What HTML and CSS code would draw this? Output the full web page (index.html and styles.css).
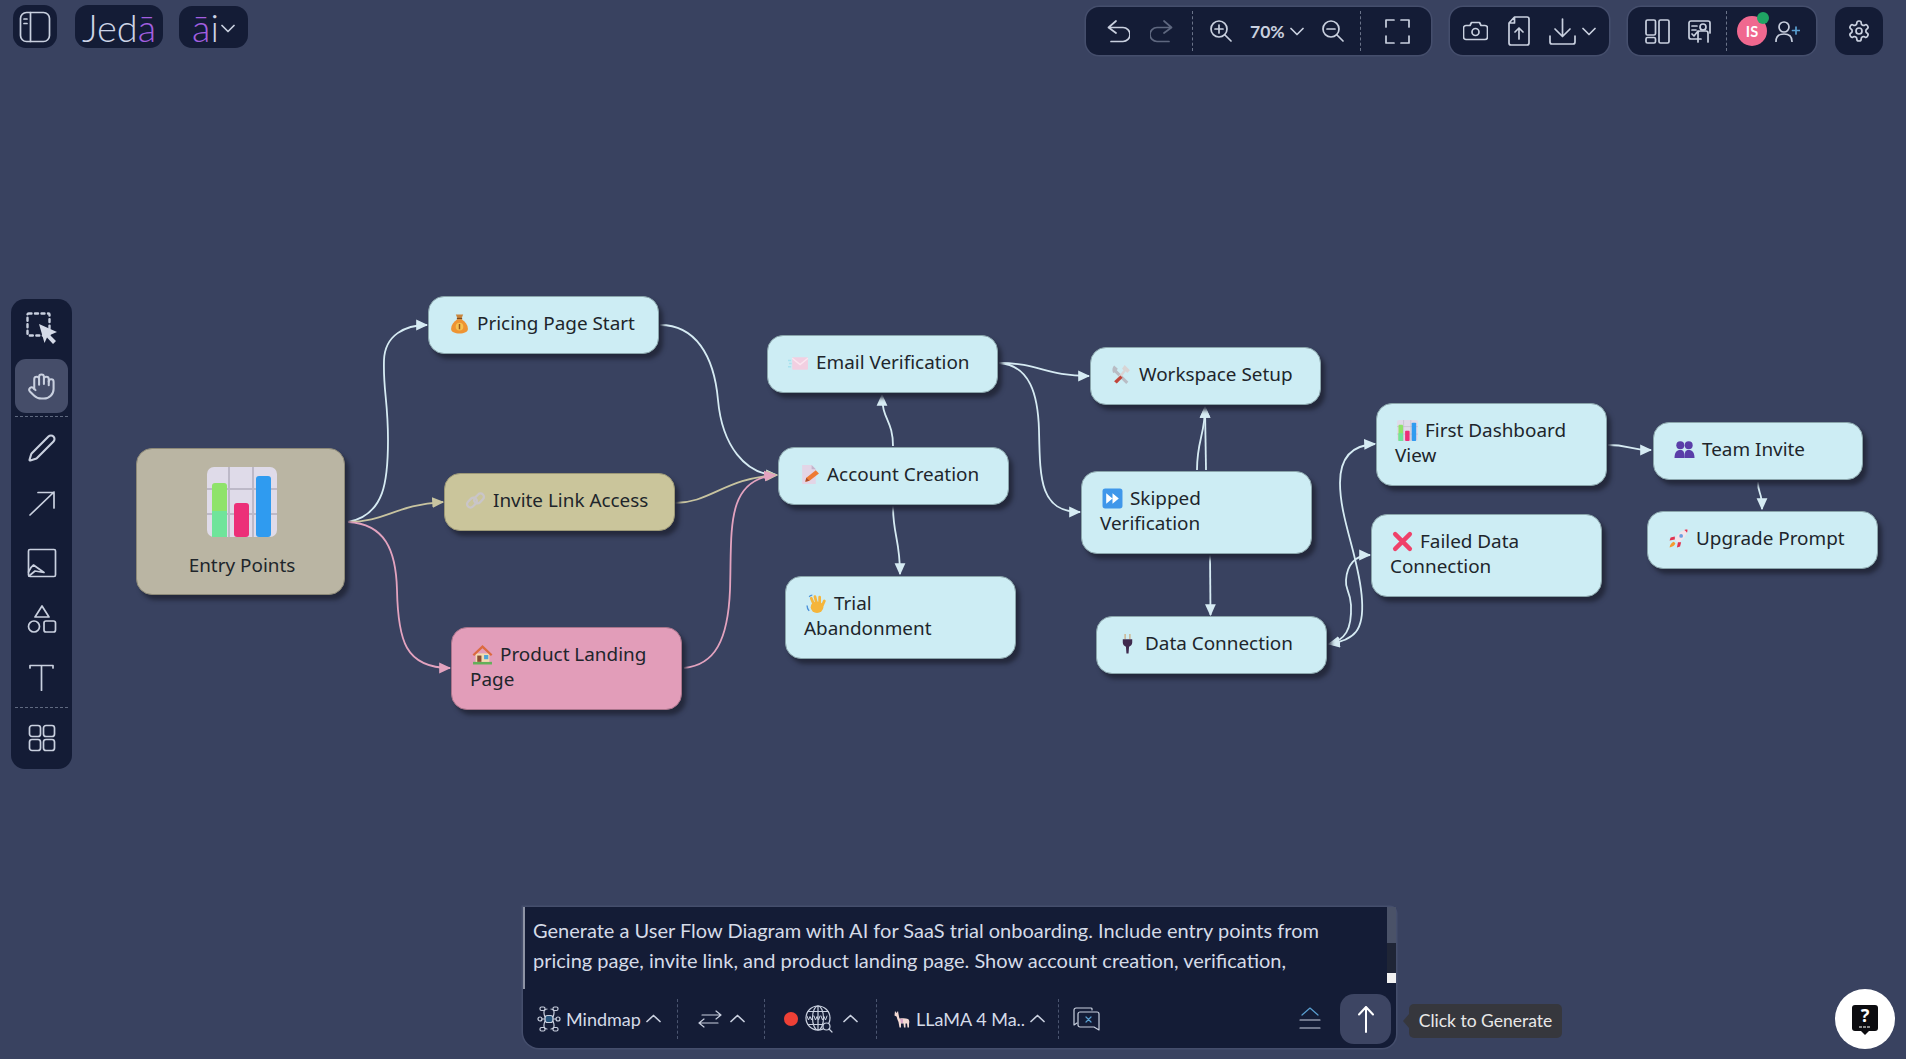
FILE: index.html
```html
<!DOCTYPE html>
<html lang="en">
<head>
<meta charset="utf-8">
<title>Jedā.ai</title>
<link rel="stylesheet" href="styles.css">
</head>
<body>
<svg class="sprite" aria-hidden="true">
  <defs>
    <symbol id="e-bag" viewBox="0 0 20 20"><path d="M6.5 1.5h7L12 5H8z" fill="#c9853c"/><rect x="7.5" y="4.6" width="5" height="1.6" fill="#7b4a1f"/><path d="M8 6C4.5 8.500 2 11.500 2 15c0 3.200 3.500 4.500 8 4.500s8-1.300 8-4.500c0-3.500-2.500-6.500-6-9z" fill="#ee9433"/><circle cx="10" cy="13" r="3.600" fill="#f7c14f"/><rect x="9.300" y="10.500" width="1.400" height="5" fill="#9a5a1c"/></symbol>
    <symbol id="e-link" viewBox="0 0 20 20"><g fill="none" stroke="#c9c5c8" stroke-width="2.200"><rect x="1.500" y="8.500" width="10.500" height="6.500" rx="3.200" transform="rotate(-45 7 12)"/><rect x="8" y="5" width="10.500" height="6.500" rx="3.200" transform="rotate(-45 13 8)"/></g></symbol>
    <symbol id="e-house" viewBox="0 0 20 20"><rect x="1" y="17" width="18" height="2.500" fill="#63b05a"/><path d="M3.500 9h13v8h-13z" fill="#f3dcb0"/><path d="M10 1L0.500 10l1.500 1.500L10 4l8 7.500 1.500-1.500z" fill="#dc6a3f"/><rect x="5" y="11" width="4" height="6" fill="#8a4d32"/><rect x="11.500" y="10.500" width="4" height="4" fill="#4fa4d6"/></symbol>
    <symbol id="e-mail" viewBox="0 0 20 20"><rect x="4" y="5" width="15" height="12" rx="1" fill="#f2cfe1"/><path d="M4 6l7.500 6L19 6" fill="none" stroke="#fbe6f0" stroke-width="1.400"/><path d="M0 8h3M1 11h2.500M0 14h3" stroke="#a8e2ee" stroke-width="1.400"/></symbol>
    <symbol id="e-memo" viewBox="0 0 20 20"><path d="M3 1h9l4 4v14H3z" fill="#e3d5e6"/><path d="M12 1v4h4z" fill="#c4b3ca"/><path d="M6 17l1-4 9-7 3 3-9 7z" fill="#ee7a33"/><path d="M6 17l1-4 3 3z" fill="#a94b2c"/></symbol>
    <symbol id="e-wave" viewBox="0 0 20 20"><ellipse cx="10.500" cy="13.500" rx="6" ry="5.500" fill="#f5b53b"/><path d="M7.500 11L5 5M10 9.500L8.500 3.500M13 9.500L13 4M15.500 12L17.500 7.500" fill="none" stroke="#f5b53b" stroke-width="2.600" stroke-linecap="round"/><path d="M1 12c0 2 .6 3.500 2 5M3 3.500C4 2.500 5 2 6 2" fill="none" stroke="#4a90d9" stroke-width="1.300"/></symbol>
    <symbol id="e-tools" viewBox="0 0 20 20"><path d="M3 1.500l3.500 3-1 1.500 11 11-2 2-11-11L2 8.500C.800 6 1.300 3 3 1.500z" fill="#b9bcc4"/><path d="M13 1l5 5-2.500 2.500-1.500-1.500L5.500 18.500 3 16.500 12 6 10.500 4.500z" fill="#d9d4d4"/><path d="M9 11l2 2-5.500 5.500-2.500-2z" fill="#c0453a"/></symbol>
    <symbol id="e-ff" viewBox="0 0 20 20"><rect x="0.500" y="0.500" width="19" height="19" rx="2.500" fill="#3f97ea"/><path d="M4 5l6 5-6 5zM10 5l6 5-6 5z" fill="#fff"/></symbol>
    <symbol id="e-plug" viewBox="0 0 20 20"><path d="M7 1h1.500v5H7zM11.500 1H13v5h-1.500z" fill="#cdb896"/><path d="M5.500 6h9v3c0 2-1.500 3.500-3 4l-.5 6.500H9L8.500 13c-1.500-.5-3-2-3-4z" fill="#3f2a4d"/></symbol>
    <symbol id="e-chart" viewBox="0 0 70 70"><rect x="0" y="0" width="70" height="70" rx="7" fill="#dfdbe9"/><path d="M0 22h70M0 47h70M22 0v70M46 0v70" stroke="#bdb9c8" stroke-width="2"/><rect x="5" y="16" width="15" height="54" rx="3" fill="#8fe36a"/><rect x="5" y="44" width="15" height="26" fill="#6fe49a"/><rect x="27" y="36" width="15" height="34" rx="3" fill="#ec2f78"/><rect x="49" y="9" width="15" height="61" rx="3" fill="#2f9bf0"/></symbol>
    <symbol id="e-x" viewBox="0 0 20 20"><path d="M3 3l14 14M17 3L3 17" stroke="#ef4169" stroke-width="4.200" stroke-linecap="round"/></symbol>
    <symbol id="e-busts" viewBox="0 0 20 20"><g fill="#5a3ea8"><circle cx="6" cy="6" r="3.800"/><circle cx="14" cy="6" r="3.800"/><path d="M0.500 18c0-5 2-7.500 5.500-7.500S10 13 10 18z"/><path d="M10 18c0-5 .5-7.500 4-7.500s5.500 2.500 5.500 7.500z"/></g></symbol>
    <symbol id="e-rocket" viewBox="0 0 20 20"><path d="M18.500 1.500C13 2 9 5.500 6.500 11l3 3c5-2.500 8.500-7 9-12.500z" fill="#f3e4ea"/><path d="M15.500 1.900c1 .500 2 1.500 2.600 2.600.4-1 .5-2 .4-3-1 0-2 .100-3 .4z" fill="#e3324f"/><circle cx="12.500" cy="7.500" r="1.800" fill="#6d9ee0"/><path d="M6.500 8L2.500 9l-1 3 5-1zM12.500 13.500l-1 4-3 1 1-5z" fill="#e3324f"/><path d="M5.500 13c-2 .5-3.500 2.500-4 5.500 3-.5 5-2 5.500-4z" fill="#f59a2f"/></symbol>
    <marker id="arr-blue" viewBox="0 0 10 10" refX="9" refY="5" markerUnits="userSpaceOnUse" markerWidth="12" markerHeight="12" orient="auto"><path d="M0 0.500L10 5L0 9.500z" fill="#d6ebf3"/></marker>
    <marker id="arr-tan" viewBox="0 0 10 10" refX="9" refY="5" markerUnits="userSpaceOnUse" markerWidth="12" markerHeight="12" orient="auto"><path d="M0 0.500L10 5L0 9.500z" fill="#c8c4a0"/></marker>
    <marker id="arr-pink" viewBox="0 0 10 10" refX="9" refY="5" markerUnits="userSpaceOnUse" markerWidth="12" markerHeight="12" orient="auto"><path d="M0 0.500L10 5L0 9.500z" fill="#e3a3bf"/></marker>
  </defs>
</svg>

<div class="canvas">
  <svg class="edges" viewBox="0 0 1906 1059">
    <g class="edge-blue">
      <path d="M348 522C385 515 388 480 388 440C388 400 383 390 384 360C385 335 405 325 427 325"/>
      <path d="M660 325C695 325 714 355 718 400C722 445 745 475 777 475"/>
      <path d="M893 446C893 420 882 420 882 395"/>
      <path d="M893 506C893 535 900 540 900 574"/>
      <path d="M999 363C1040 363 1045 376 1089 376"/>
      <path d="M999 363C1030 365 1038 395 1039 430C1040 480 1040 512 1080 512"/>
      <path d="M1197 470C1197 440 1205 435 1205 407"/>
      <path d="M1206 470L1205 407"/>
      <path d="M1210 555L1210.500 615"/>
      <path d="M1362 600C1364 630 1355 640 1329 644"/>
      <path d="M1362 600C1360 560 1340 520 1340 483C1340 460 1350 445 1375 444"/>
      <path d="M1351 605C1352 630 1345 640 1329 644"/>
      <path d="M1351 605C1350 590 1345 590 1346 580C1347 565 1355 555 1370 555"/>
      <path d="M1608 445C1630 445 1628 450 1651 450"/>
      <path d="M1758 482C1758 495 1762 490 1762 509"/>
    </g>
    <g class="edge-tan">
      <path d="M348 522C385 522 395 505 443 502"/>
      <path d="M675 503C710 503 725 478 777 475"/>
    </g>
    <g class="edge-pink">
      <path d="M348 522C385 524 396 550 397 590C398 640 405 668 450 668"/>
      <path d="M684 668C715 665 728 640 730 590C732 530 725 480 775 475"/>
    </g>
  </svg>

  <div class="node node-entry n-entry">
    <svg class="big-chart"><use href="#e-chart"/></svg>
    <span>Entry Points</span>
  </div>
  <div class="node n-pricing"><svg class="emoji"><use href="#e-bag"/></svg>Pricing Page Start</div>
  <div class="node node-tan n-invite"><svg class="emoji"><use href="#e-link"/></svg>Invite Link Access</div>
  <div class="node node-pink n-product"><svg class="emoji"><use href="#e-house"/></svg>Product Landing Page</div>
  <div class="node n-email"><svg class="emoji"><use href="#e-mail"/></svg>Email Verification</div>
  <div class="node n-account"><svg class="emoji"><use href="#e-memo"/></svg>Account Creation</div>
  <div class="node n-trial"><svg class="emoji"><use href="#e-wave"/></svg>Trial Abandonment</div>
  <div class="node n-workspace"><svg class="emoji"><use href="#e-tools"/></svg>Workspace Setup</div>
  <div class="node n-skipped"><svg class="emoji"><use href="#e-ff"/></svg>Skipped Verification</div>
  <div class="node n-data"><svg class="emoji"><use href="#e-plug"/></svg>Data Connection</div>
  <div class="node n-first"><svg class="emoji"><use href="#e-chart"/></svg>First Dashboard View</div>
  <div class="node n-failed"><svg class="emoji"><use href="#e-x"/></svg>Failed Data Connection</div>
  <div class="node n-team"><svg class="emoji"><use href="#e-busts"/></svg>Team Invite</div>
  <div class="node n-upgrade"><svg class="emoji"><use href="#e-rocket"/></svg>Upgrade Prompt</div>
</div>

<div class="app">
  <header class="topbar">
    <div class="brand">
      <button class="chip chip-panel">
        <svg class="ic" width="32" height="32" viewBox="0 0 32 32"><rect x="1.500" y="1.500" width="29" height="29" rx="6"/><path d="M11.500 1.500v29M5 8h3M5 12.500h3"/></svg>
      </button>
      <div class="chip chip-logo"><span class="logo-light">Jed</span><span class="logo-purple">ā</span></div>
      <div class="chip chip-ai"><span class="logo-purple">ā</span><span class="logo-light">i</span>
        <svg class="ic chev-ai" width="14" height="9" viewBox="0 0 14 9"><path d="M1 1.500L7 7.500L13 1.500"/></svg>
      </div>
    </div>
    <div class="tools">
      <div class="group group-view">
        <svg class="ic" width="23" height="23" viewBox="0 0 23 23"><path d="M9 1L1.500 7.500L9 13M1.500 7.500H16a6.500 6.500 0 0 1 0 14H4"/></svg>
        <svg class="ic ic-dim m20" width="23" height="23" viewBox="0 0 23 23"><path d="M14 1L21.500 7.500L14 13M21.500 7.500H7a6.500 6.500 0 0 0 0 14H19"/></svg>
        <i class="vdash m19"></i>
        <svg class="ic m17" width="22" height="22" viewBox="0 0 22 22"><circle cx="9" cy="9" r="8"/><path d="M15 15L21 21M9 5v8M5 9h8"/></svg>
        <span class="zoom-val m18">70%</span>
        <svg class="ic m7" width="14" height="9" viewBox="0 0 14 9"><path d="M1 1.500L7 7.500L13 1.500"/></svg>
        <svg class="ic m18" width="22" height="22" viewBox="0 0 22 22"><circle cx="9" cy="9" r="8"/><path d="M15 15L21 21M5 9h8"/></svg>
        <i class="vdash m16"></i>
        <svg class="ic m24" width="25" height="25" viewBox="0 0 25 25"><path d="M1 8V1H9M16 1H24V8M24 17V24H16M9 24H1V17"/></svg>
      </div>
      <div class="group group-files">
        <svg class="ic" width="25" height="20" viewBox="0 0 25 20"><path d="M3 4.500H7L8.500 1.500H16.500L18 4.500H22A2.500 2.500 0 0 1 24.500 7V16A2.500 2.500 0 0 1 22 18.500H3A2.500 2.500 0 0 1 .5 16V7A2.500 2.500 0 0 1 3 4.500Z"/><circle cx="12.500" cy="11" r="3.500"/></svg>
        <svg class="ic m20" width="22" height="30" viewBox="0 0 22 30"><path d="M6.500 1H19A2 2 0 0 1 21 3V27A2 2 0 0 1 19 29H3A2 2 0 0 1 1 27V7ZM6.500 1V7H1M11 23V12M7 16L11 12L15 16"/></svg>
        <svg class="ic m19" width="27" height="27" viewBox="0 0 27 27"><path d="M13.500 1V18M6 11L13.500 18.500L21 11M1 18V24A2 2 0 0 0 3 26H24A2 2 0 0 0 26 24V18"/></svg>
        <svg class="ic m6" width="14" height="9" viewBox="0 0 14 9"><path d="M1 1.500L7 7.500L13 1.500"/></svg>
      </div>
      <div class="group group-people">
        <svg class="ic" width="25" height="25" viewBox="0 0 25 25"><rect x="1" y="1" width="9.500" height="15" rx="1.500"/><rect x="1" y="18.500" width="9.500" height="5.500" rx="1.500"/><rect x="14" y="1" width="10" height="23" rx="1.500"/></svg>
        <svg class="ic m18" width="23" height="23" viewBox="0 0 23 23"><path d="M13 19H3A2 2 0 0 1 1 17V3A2 2 0 0 1 3 1H20A2 2 0 0 1 22 3V13"/><circle cx="15" cy="7" r="3"/><path d="M10 22V13A2 2 0 0 1 12 11H18A2 2 0 0 1 20 13V22M4 6H9M4 10H8M4 14L6 16L10 11"/></svg>
        <i class="vdash m15"></i>
        <span class="avatar m10">IS<i class="presence"></i></span>
        <svg class="ic m8" width="25" height="21" viewBox="0 0 25 21"><circle cx="9" cy="6" r="5"/><path d="M1 20.500C1 15 4 13 9 13S17 15 17 20.500"/><path class="ic-plus" d="M21 6V13M17.500 9.500H24.500"/></svg>
      </div>
      <button class="group group-gear">
        <svg class="ic" width="24" height="24" viewBox="0 0 24 24"><path d="M12.220 2h-.44a2 2 0 0 0-2 2v.18a2 2 0 0 1-1 1.730l-.43.250a2 2 0 0 1-2 0l-.15-.080a2 2 0 0 0-2.730.730l-.22.380a2 2 0 0 0 .730 2.730l.15.100a2 2 0 0 1 1 1.720v.510a2 2 0 0 1-1 1.740l-.15.090a2 2 0 0 0-.730 2.730l.22.380a2 2 0 0 0 2.730.730l.15-.080a2 2 0 0 1 2 0l.43.250a2 2 0 0 1 1 1.730V20a2 2 0 0 0 2 2h.44a2 2 0 0 0 2-2v-.18a2 2 0 0 1 1-1.730l.43-.250a2 2 0 0 1 2 0l.15.080a2 2 0 0 0 2.730-.730l.22-.390a2 2 0 0 0-.730-2.730l-.15-.080a2 2 0 0 1-1-1.740v-.500a2 2 0 0 1 1-1.740l.15-.090a2 2 0 0 0 .730-2.730l-.22-.380a2 2 0 0 0-2.730-.730l-.15.080a2 2 0 0 1-2 0l-.43-.250a2 2 0 0 1-1-1.730V4a2 2 0 0 0-2-2z"/><circle cx="12" cy="12" r="3"/></svg>
      </button>
    </div>
  </header>

  <main class="stage">
    <nav class="sidebar">
      <button class="tool">
        <svg class="ic" width="32" height="32" viewBox="0 0 32 32"><rect class="dashed" x="1.500" y="1.500" width="22" height="22" rx="1"/><path class="solid" d="M13 12L31 20L24 23L30 29L27 32L21 25.500L18.500 31Z"/></svg>
      </button>
      <button class="tool tool-active m-t4">
        <svg class="ic" width="29" height="29" viewBox="0 0 24 24"><path d="M18 11V6a2 2 0 0 0-2-2a2 2 0 0 0-2 2"/><path d="M14 10V4a2 2 0 0 0-2-2a2 2 0 0 0-2 2v2"/><path d="M10 10.500V6a2 2 0 0 0-2-2a2 2 0 0 0-2 2v8"/><path d="M18 8a2 2 0 1 1 4 0v6a8 8 0 0 1-8 8h-2c-2.800 0-4.500-.860-5.990-2.340l-3.600-3.600a2 2 0 0 1 2.830-2.820L7 15"/></svg>
      </button>
      <i class="hdash"></i>
      <button class="tool">
        <svg class="ic" width="30" height="30" viewBox="0 0 24 24"><path d="M21.174 6.812a1 1 0 0 0-3.986-3.987L3.842 16.174a2 2 0 0 0-.5.830l-1.321 4.352a.5.5 0 0 0 .623.622l4.353-1.320a2 2 0 0 0 .830-.497z"/></svg>
      </button>
      <button class="tool m-t1">
        <svg class="ic" width="26" height="25" viewBox="0 0 26 25"><path d="M1 24L25 1M9 1.500H25V17"/></svg>
      </button>
      <button class="tool m-t6">
        <svg class="ic" width="30" height="30" viewBox="0 0 30 30"><rect x="1.500" y="1.500" width="27" height="27" rx="1.500"/><path d="M1.500 24C3 20 5 18 6.500 17L17 24.500L8 23L2 28"/></svg>
      </button>
      <button class="tool m-t2">
        <svg class="ic" width="30" height="30" viewBox="0 0 30 30"><path d="M15 2L22 13H8Z"/><circle cx="7" cy="22.500" r="5.500"/><rect x="17" y="17" width="11.500" height="11" rx="2"/></svg>
      </button>
      <button class="tool m-t4">
        <svg class="ic" width="25" height="27" viewBox="0 0 25 27"><path d="M1 4V1.500H24V4M12.500 1.500V26.500"/></svg>
      </button>
      <i class="hdash hdash-low"></i>
      <button class="tool">
        <svg class="ic" width="28" height="28" viewBox="0 0 28 28"><rect x="1.500" y="1.500" width="11" height="11" rx="2.500"/><rect x="15.500" y="1.500" width="11" height="11" rx="2.500"/><rect x="1.500" y="15.500" width="11" height="11" rx="2.500"/><rect x="15.500" y="15.500" width="11" height="11" rx="2.500"/></svg>
      </button>
    </nav>
  </main>

  <footer class="dock">
    <section class="composer">
      <div class="prompt">
        <div class="prompt-text">Generate a User Flow Diagram with AI for SaaS trial onboarding. Include entry points from pricing page, invite link, and product landing page. Show account creation, verification,</div>
        <div class="scrollbar"><i class="thumb"></i><i class="corner"></i></div>
      </div>
      <div class="controls">
        <svg class="ic ic-thin" width="24" height="26" viewBox="0 0 24 26"><rect class="map-core" x="8" y="9.500" width="8" height="7" rx="2.500"/><path d="M8 11C6 6 7 3 10 3M16 11C18 6 17 3 14 3M8 15C6 20 7 23 10 23M16 15C18 20 17 23 14 23M8 13H5M16 13H19"/><rect x="3" y="1" width="5" height="3.500" rx="1.500"/><rect x="16" y="1" width="5" height="3.500" rx="1.500"/><rect x="3" y="21.500" width="5" height="3.500" rx="1.500"/><rect x="16" y="21.500" width="5" height="3.500" rx="1.500"/><circle cx="3" cy="13" r="2"/><circle cx="21" cy="13" r="2"/></svg>
        <span class="ctl-label ctl-mind m5">Mindmap</span>
        <svg class="ic m6" width="15" height="9" viewBox="0 0 15 9"><path d="M1 7.500L7.500 1.500L14 7.500"/></svg>
        <i class="vdash vdash-b m16"></i>
        <svg class="ic ic-thin m20" width="24" height="18" viewBox="0 0 24 18"><path d="M23 5H4M18 1L23 5L18 9M1 13H20M6 9L1 13L6 17"/></svg>
        <svg class="ic m8" width="15" height="9" viewBox="0 0 15 9"><path d="M1 7.500L7.500 1.500L14 7.500"/></svg>
        <i class="vdash vdash-b m19"></i>
        <i class="rec m19"></i>
        <svg class="ic ic-thin m7" width="28" height="28" viewBox="0 0 28 28"><circle cx="13" cy="13" r="12"/><ellipse cx="13" cy="13" rx="5.500" ry="12"/><path d="M13 1V25M3 6.500H23M3 19.500H23"/><circle class="globe-lens" cx="21.500" cy="21.500" r="3.500"/><path d="M24 24L27 27"/><path class="www" d="M2 11L3.500 15L5 11.500L6.500 15L8 11M9 11L10.500 15L12 11.500L13.500 15L15 11M16 11L17.500 15L19 11.500L20.500 15L22 11"/></svg>
        <svg class="ic m10" width="15" height="9" viewBox="0 0 15 9"><path d="M1 7.500L7.500 1.500L14 7.500"/></svg>
        <i class="vdash vdash-b m18"></i>
        <svg class="m17" width="17" height="18" viewBox="0 0 17 18"><path d="M1 1L2.500 3L4 1L4.500 4C5 6 5 7 5.500 8.500C9 8 12 8 14 9C15.500 10 15.500 12 15 14V17.500H13.500L13 13.500H11.500V17.500H10L9.500 13.500H7V17.500H5.500L4.500 12C3 9 3 7.500 2.500 6.500L0.500 5.500Z" fill="#f3d9d3"/><path d="M6 9H9V13H7Z" fill="#d9a5c6"/></svg>
        <span class="ctl-label ctl-model m5">LLaMA 4 Ma..</span>
        <svg class="ic m4" width="15" height="9" viewBox="0 0 15 9"><path d="M1 7.500L7.500 1.500L14 7.500"/></svg>
        <i class="vdash vdash-b m13"></i>
        <svg class="ic ic-thin m14" width="27" height="24" viewBox="0 0 27 24"><path d="M19 3V2A1 1 0 0 0 18 1H3A2 2 0 0 0 1 3V18L4 16"/><path d="M7 5H24A2 2 0 0 1 26 7V23L21 20H7A2 2 0 0 1 5 18V7A2 2 0 0 1 7 5Z"/><path class="ic-plus" d="M13 10L18 15M18 10L13 15"/></svg>
        <svg class="ic ic-thin m-auto" width="22" height="24" viewBox="0 0 22 24"><path class="ic-plus" d="M3 8L11 1L19 8"/><path d="M1 13H21M1 21H21"/></svg>
        <button class="generate m19">
          <svg class="ic-white" width="16" height="28" viewBox="0 0 16 28"><path d="M8 27V2M1 9.500L8 2L15 9.500"/></svg>
        </button>
      </div>
    </section>
    <div class="tooltip">Click to Generate</div>
    <button class="help">
      <span class="help-bubble">?</span>
    </button>
  </footer>
</div>
</body>
</html>
```

FILE: styles.css
```css
* { box-sizing: border-box; }
html, body { margin: 0; height: 100%; overflow: hidden; }
body {
  background: #394260;
  font-family: "Lato", "Noto Sans", sans-serif;
  color: #d5dbe8;
  position: relative;
}
button { border: 0; padding: 0; background: none; font: inherit; color: inherit; }
i { display: block; font-style: normal; }
.sprite { position: absolute; width: 0; height: 0; }

/* diagram canvas */
.canvas { position: absolute; inset: 0; }
.edges { position: absolute; left: 0; top: 0; width: 1906px; height: 1059px; }
.edges path { fill: none; stroke-width: 1.800; }
.edge-blue path { stroke: #d6ebf3; marker-end: url(#arr-blue); }
.edge-tan path { stroke: #c8c4a0; marker-end: url(#arr-tan); }
.edge-pink path { stroke: #e3a3bf; marker-end: url(#arr-pink); }

.node {
  position: absolute;
  width: 231px;
  padding: 14px 18px 17px;
  background: #cdedf4;
  border: 1.500px solid #8aa5ab;
  border-radius: 16px;
  box-shadow: 4px 5px 4px #24293c;
  color: #20252b;
  font: 18.900px/25px "Noto Sans", sans-serif;
}
.node-tan { background: #cac59b; border-color: #9c9877; }
.node-pink { background: #e29db9; border-color: #a9748b; }
.node-entry {
  display: flex;
  flex-direction: column;
  align-items: center;
  background: #bab5a3;
  border-color: #8d8978;
  padding: 18px 0 0 3px;
  gap: 16px;
}
.big-chart { width: 70px; height: 70px; }
.emoji { display: inline-block; width: 21px; height: 21px; vertical-align: -4px; margin: 0 7px 0 2px; }

.n-entry { left: 136px; top: 448px; width: 209px; height: 147px; }
.n-pricing { left: 428px; top: 296px; }
.n-invite { left: 444px; top: 473px; }
.n-product { left: 451px; top: 627px; }
.n-email { left: 767px; top: 335px; }
.n-account { left: 778px; top: 447px; }
.n-trial { left: 785px; top: 576px; }
.n-workspace { left: 1090px; top: 347px; }
.n-skipped { left: 1081px; top: 471px; }
.n-data { left: 1096px; top: 616px; }
.n-first { left: 1376px; top: 403px; }
.n-failed { left: 1371px; top: 514px; }
.n-team { left: 1653px; top: 422px; width: 210px; }
.n-upgrade { left: 1647px; top: 511px; }

/* app chrome */
.app {
  position: relative;
  display: flex;
  flex-direction: column;
  height: 100vh;
}
.ic { display: block; flex: none; fill: none; stroke: #c9d0df; stroke-width: 1.700; stroke-linecap: round; stroke-linejoin: round; }
.ic-dim { stroke: #5e677f; }
.ic-thin { stroke-width: 1.200; }
.ic-plus { stroke: #5a9fd0; }
.ic-white { display: block; fill: none; stroke: #fff; stroke-width: 2; stroke-linecap: round; stroke-linejoin: round; }

.m4 { margin-left: 4px; }
.m5 { margin-left: 5px; }
.m6 { margin-left: 6px; }
.m7 { margin-left: 7px; }
.m8 { margin-left: 8px; }
.m10 { margin-left: 10px; }
.m13 { margin-left: 13px; }
.m14 { margin-left: 14px; }
.m15 { margin-left: 15px; }
.m16 { margin-left: 16px; }
.m17 { margin-left: 17px; }
.m18 { margin-left: 18px; }
.m19 { margin-left: 19px; }
.m20 { margin-left: 20px; }
.m24 { margin-left: 24px; }
.m-auto { margin-left: auto; }

.topbar {
  flex: none;
  height: 55px;
  padding: 5px 23px 0 13px;
  display: flex;
  justify-content: space-between;
}
.brand { display: flex; gap: 18px; }
.chip {
  height: 43px;
  display: flex;
  align-items: center;
  justify-content: center;
  background: #141c36;
  border-radius: 13px;
  font-size: 38px;
  font-weight: 300;
  line-height: 1;
}
.chip-panel { width: 44px; }
.chip-logo { width: 88px; }
.chip-ai { width: 69px; margin-top: 1px; height: 42px; margin-left: -2px; }
.chev-ai { margin-left: 2px; margin-top: 3px; }
.logo-light { color: #cdd4e6; }
.logo-purple { color: #a35fe0; }

.tools { display: flex; gap: 19px; margin-top: 2px; }
.group {
  height: 48px;
  display: flex;
  align-items: center;
  background: #141c36;
  border-radius: 13px;
  box-shadow: 0 0 0 1.500px #454e6c;
}
.group-view { width: 345px; padding-left: 21px; }
.group-files { width: 159px; padding-left: 13px; }
.group-people { width: 188px; padding-left: 17px; }
.group-gear { width: 48px; justify-content: center; box-shadow: none; }
.vdash { flex: none; width: 0; height: 40px; border-left: 1px dashed #6a7389; }
.vdash-b { height: 40px; border-left-color: #4b5570; }
.zoom-val { font-size: 17.500px; font-weight: 700; color: #c9d0df; width: 33px; white-space: nowrap; }
.avatar {
  position: relative;
  flex: none;
  width: 30px;
  height: 30px;
  border-radius: 50%;
  background: #f0688f;
  color: #fff;
  font-size: 14.500px;
  font-weight: 700;
  display: flex;
  align-items: center;
  justify-content: center;
}
.presence {
  position: absolute;
  right: -2px;
  top: -4px;
  width: 12px;
  height: 12px;
  border-radius: 50%;
  background: #1fa463;
}

/* tool rail */
.stage { flex: 1; min-height: 0; padding: 244px 0 0 11px; }
.sidebar {
  width: 61px;
  height: 470px;
  padding: 2px 4px 4px;
  background: #141c36;
  border-radius: 14px;
  display: flex;
  flex-direction: column;
}
.tool { flex: none; height: 54px; display: flex; align-items: center; justify-content: center; border-radius: 11px; }
.tool-active { background: #454d69; }
.m-t1 { margin-top: 1px; }
.m-t2 { margin-top: 2px; }
.m-t4 { margin-top: 4px; }
.m-t6 { margin-top: 6px; }
.dashed { stroke-dasharray: 3 3.500; stroke-width: 2.400; stroke: #c9d0df; }
.solid { fill: #d5dbe8; stroke: none; }
.hdash { flex: none; height: 8px; }
.hdash::after { content: ""; display: block; margin-top: 3px; border-top: 1px dashed #5f6980; }
.hdash-low { height: 7px; }

/* bottom dock */
.dock {
  flex: none;
  height: 141px;
  margin-bottom: 11px;
  padding-left: 523px;
  display: flex;
}
.composer {
  flex: none;
  width: 873px;
  display: flex;
  flex-direction: column;
  background: #141c36;
  border-radius: 0 6px 14px 16px;
  box-shadow: 0 0 0 1.500px #454e6c;
}
.prompt {
  flex: none;
  height: 82px;
  display: flex;
  align-items: flex-start;
  border-left: 2px solid #8d93a5;
}
.prompt-text {
  flex: 1;
  height: 76px;
  overflow: hidden;
  padding: 8px 48px 0 8px;
  font-size: 20px;
  line-height: 30px;
  color: #d5dbe8;
}
.scrollbar { flex: none; width: 9px; height: 76px; display: flex; flex-direction: column; background: #1f2536; }
.thumb { height: 36px; background: #4a5268; }
.corner { margin-top: auto; height: 10px; background: #f1f1f1; }
.controls { flex: 1; display: flex; align-items: center; padding: 0 5px 0 14px; }
.ctl-label { flex: none; font-size: 18px; color: #d5dbe8; white-space: nowrap; }
.ctl-mind { width: 74px; }
.ctl-model { width: 110px; }
.map-core { fill: #25547c; }
.rec { flex: none; width: 14px; height: 14px; border-radius: 50%; background: #ee4036; }
.globe-lens { fill: #141c36; }
.www { stroke-width: 1; }
.generate {
  flex: none;
  width: 51px;
  height: 50px;
  background: #3d4563;
  border-radius: 14px;
  display: flex;
  align-items: center;
  justify-content: center;
}
.tooltip {
  position: relative;
  flex: none;
  align-self: flex-start;
  margin: 97px 0 0 13px;
  width: 153px;
  height: 34px;
  background: #36373d;
  border-radius: 5px;
  color: #e8e8e8;
  font-size: 17.500px;
  line-height: 34px;
  text-align: center;
}
.tooltip::before {
  content: "";
  position: absolute;
  left: -6px;
  top: 10px;
  border-style: solid;
  border-width: 7px 6px 7px 0;
  border-color: transparent #36373d transparent transparent;
}
.help {
  flex: none;
  align-self: flex-start;
  margin: 82px 11px 0 auto;
  width: 60px;
  height: 60px;
  border-radius: 50%;
  background: #fff;
  display: flex;
  align-items: center;
  justify-content: center;
}
.help-bubble {
  position: relative;
  width: 26px;
  height: 26px;
  margin-top: -2px;
  background: #0c0c10;
  border-radius: 3px;
  color: #fff;
  font: 700 18px/21px "Noto Sans", sans-serif;
  text-align: center;
}
.help-bubble::before {
  content: "";
  position: absolute;
  left: 7px;
  bottom: 3px;
  width: 3px;
  height: 2px;
  background: #8a8a8a;
  box-shadow: 4px 0 0 #8a8a8a, 8px 0 0 #8a8a8a;
}
.help-bubble::after {
  content: "";
  position: absolute;
  left: 9px;
  bottom: -4px;
  border-style: solid;
  border-width: 4px 4px 0;
  border-color: #0c0c10 transparent transparent;
}
```
